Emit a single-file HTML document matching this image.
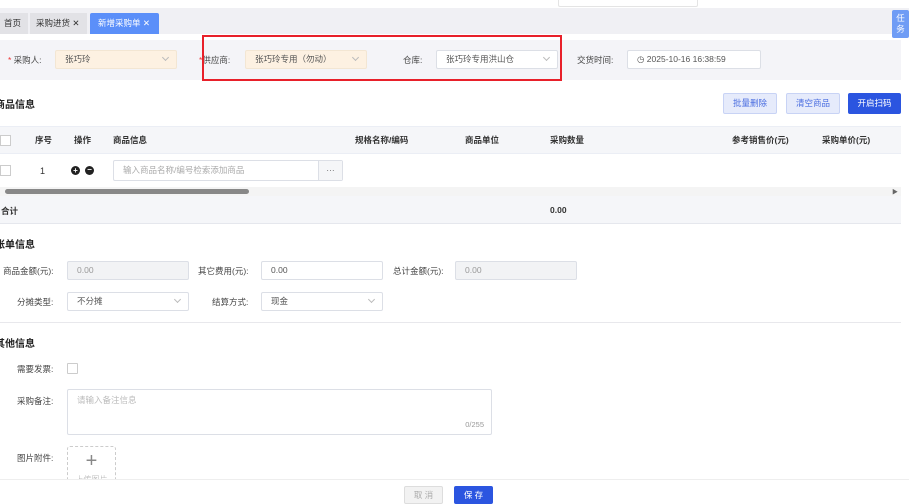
<!DOCTYPE html><html><head><meta charset="utf-8"><style>
*{box-sizing:border-box;margin:0;padding:0}
body{width:909px;height:502px;overflow:hidden;background:#fff;font-family:"Liberation Sans","Noto Sans CJK SC",sans-serif;font-size:9px;color:#333;position:relative}
.a{position:absolute}
.inp{position:absolute;height:19px;border:1px solid #dcdfe6;border-radius:2px;background:#fff;padding:0 9px;line-height:17px;font-size:8.5px;color:#555}
.dis{background:#f2f3f5;color:#999}
.chev{position:absolute;right:8px;top:4px;width:5px;height:5px;border-right:1px solid #bbb;border-bottom:1px solid #bbb;transform:rotate(45deg)}
.lbl{position:absolute;font-size:8.5px;color:#444;text-align:right}
.h{position:absolute;font-size:10px;font-weight:bold;color:#222}
.th{position:absolute;top:134px;font-weight:bold;font-size:8.5px;color:#333}
.btn{position:absolute;top:93px;height:21px;border-radius:2px;font-size:8.5px;line-height:19px;text-align:center}
</style></head><body>
<div class="a" style="left:558px;top:-2px;width:140px;height:9px;border:1px solid #e4e4e4;border-radius:2px"></div>
<div class="a" style="left:0;top:8px;width:909px;height:26px;background:#f0f0f4"></div>
<div class="a" style="left:0;top:13px;width:28px;height:21px;background:#e2e2e6;line-height:21px;padding-left:4px;font-size:8.5px">首页</div>
<div class="a" style="left:30px;top:13px;width:57px;height:21px;background:#e2e2e6;line-height:21px;padding-left:6px;font-size:8.5px">采购进货 ✕</div>
<div class="a" style="left:90px;top:13px;width:69px;height:21px;background:#5b8ff9;color:#fff;line-height:21px;padding-left:8px;font-size:8.5px;border-radius:2px 2px 0 0">新增采购单 ✕</div>
<div class="a" style="left:892px;top:10px;width:17px;height:28px;background:#6f9cf5;color:#fff;font-size:8.5px;line-height:11px;text-align:center;padding-top:3px;border-radius:2px">任<br>务</div>
<div class="a" style="left:0;top:40px;width:901px;height:40px;background:#f4f4f8"></div>
<div class="lbl" style="left:8px;top:54px"><span style="color:#e33">*</span> 采购人:</div>
<div class="inp" style="left:55px;top:50px;width:122px;background:#fdf1e2;border-color:#f3e6d3">张巧玲<i class="chev"></i></div>
<div class="lbl" style="left:199px;top:54px"><span style="color:#e33">*</span>供应商:</div>
<div class="inp" style="left:245px;top:50px;width:122px;background:#fdf1e2;border-color:#f3e6d3">张巧玲专用（勿动）<i class="chev"></i></div>
<div class="lbl" style="left:403px;top:54px">仓库:</div>
<div class="inp" style="left:436px;top:50px;width:122px">张巧玲专用洪山仓<i class="chev"></i></div>
<div class="lbl" style="left:577px;top:54px">交货时间:</div>
<div class="inp" style="left:627px;top:50px;width:134px">◷ 2025-10-16 16:38:59</div>
<div class="a" style="left:202px;top:35px;width:360px;height:46px;border:2px solid #e8202a"></div>
<div class="h" style="left:-5px;top:96px">商品信息</div>
<div class="btn" style="left:723px;width:54px;background:#e6ebfb;border:1px solid #c8d3f5;color:#4a6de0">批量删除</div>
<div class="btn" style="left:786px;width:54px;background:#e6ebfb;border:1px solid #c8d3f5;color:#4a6de0">清空商品</div>
<div class="btn" style="left:848px;width:53px;background:#2b55e0;color:#fff;border:1px solid #2b55e0">开启扫码</div>
<div class="a" style="left:0;top:126px;width:901px;height:28px;background:#f5f6f9;border-top:1px solid #ebeef5;border-bottom:1px solid #ebeef5"></div>
<div class="a" style="left:0;top:135px;width:11px;height:11px;border:1px solid #ccc;background:#fff"></div>
<div class="th" style="left:35px">序号</div><div class="th" style="left:74px">操作</div><div class="th" style="left:113px">商品信息</div>
<div class="th" style="left:355px">规格名称/编码</div><div class="th" style="left:465px">商品单位</div><div class="th" style="left:550px">采购数量</div>
<div class="th" style="left:732px">参考销售价(元)</div><div class="th" style="left:822px">采购单价(元)</div>
<div class="a" style="left:0;top:165px;width:11px;height:11px;border:1px solid #ccc"></div>
<div class="a" style="left:40px;top:166px">1</div>
<div class="a" style="left:71px;top:166px;width:9px;height:9px;border-radius:50%;background:#222;color:#fff;font-size:8px;line-height:9px;text-align:center;font-weight:bold">+</div>
<div class="a" style="left:85px;top:166px;width:9px;height:9px;border-radius:50%;background:#222;color:#fff;font-size:8px;line-height:8px;text-align:center;font-weight:bold">−</div>
<div class="inp" style="left:113px;top:160px;width:230px;height:21px;line-height:19px;color:#aaa;padding-left:9px">输入商品名称/编号检索添加商品<span style="position:absolute;right:0;top:0;width:24px;height:19px;background:#f5f6f8;border-left:1px solid #dcdfe6;text-align:center;color:#666">···</span></div>
<div class="a" style="left:0;top:187px;width:901px;height:9px;background:#f4f4f4"></div>
<div class="a" style="left:5px;top:189px;width:244px;height:5px;background:#888;border-radius:3px"></div>
<div class="a" style="left:892px;top:187px;font-size:6px;color:#666">▶</div>
<div class="a" style="left:0;top:196px;width:901px;height:28px;background:#f5f6f9;border-bottom:1px solid #e5e7ed"></div>
<div class="a" style="left:1px;top:205px;font-weight:bold;font-size:8.5px">合计</div>
<div class="a" style="left:550px;top:205px;font-weight:bold;font-size:8.5px">0.00</div>
<div class="h" style="left:-5px;top:236px">账单信息</div>
<div class="lbl" style="left:3px;top:265px">商品金额(元):</div>
<div class="inp dis" style="left:67px;top:261px;width:122px">0.00</div>
<div class="lbl" style="left:198px;top:265px">其它费用(元):</div>
<div class="inp" style="left:261px;top:261px;width:122px">0.00</div>
<div class="lbl" style="left:393px;top:265px">总计金额(元):</div>
<div class="inp dis" style="left:455px;top:261px;width:122px">0.00</div>
<div class="lbl" style="left:17px;top:296px">分摊类型:</div>
<div class="inp" style="left:67px;top:292px;width:122px">不分摊<i class="chev"></i></div>
<div class="lbl" style="left:212px;top:296px">结算方式:</div>
<div class="inp" style="left:261px;top:292px;width:122px">现金<i class="chev"></i></div>
<div class="a" style="left:0;top:322px;width:901px;height:1px;background:#e8e8ec"></div>
<div class="h" style="left:-5px;top:335px">其他信息</div>
<div class="lbl" style="left:17px;top:363px">需要发票:</div>
<div class="a" style="left:67px;top:363px;width:11px;height:11px;border:1px solid #ccc;border-radius:1px"></div>
<div class="lbl" style="left:17px;top:395px">采购备注:</div>
<div class="inp" style="left:67px;top:389px;width:425px;height:46px;color:#bbb;line-height:20px">请输入备注信息<span style="position:absolute;right:7px;bottom:5px;font-size:7.5px;line-height:9px;color:#999">0/255</span></div>
<div class="lbl" style="left:17px;top:452px">图片附件:</div>
<div class="a" style="left:67px;top:446px;width:49px;height:40px;border:1px dashed #ccc;border-radius:3px;border-bottom:none;text-align:center;color:#888;font-size:20px;font-weight:200;line-height:28px">+<div style="font-size:8px;line-height:10px;color:#aaa">上传图片</div></div>
<div class="a" style="left:0;top:479px;width:909px;height:23px;background:#fff;border-top:1px solid #eee"></div>
<div class="a" style="left:404px;top:486px;width:39px;height:18px;background:#f2f2f2;border:1px solid #ddd;border-radius:2px;color:#aaa;text-align:center;line-height:16px;font-size:8.5px">取 消</div>
<div class="a" style="left:454px;top:486px;width:39px;height:18px;background:#2b55e0;border-radius:2px;color:#fff;text-align:center;line-height:18px;font-size:8.5px">保 存</div>
</body></html>
